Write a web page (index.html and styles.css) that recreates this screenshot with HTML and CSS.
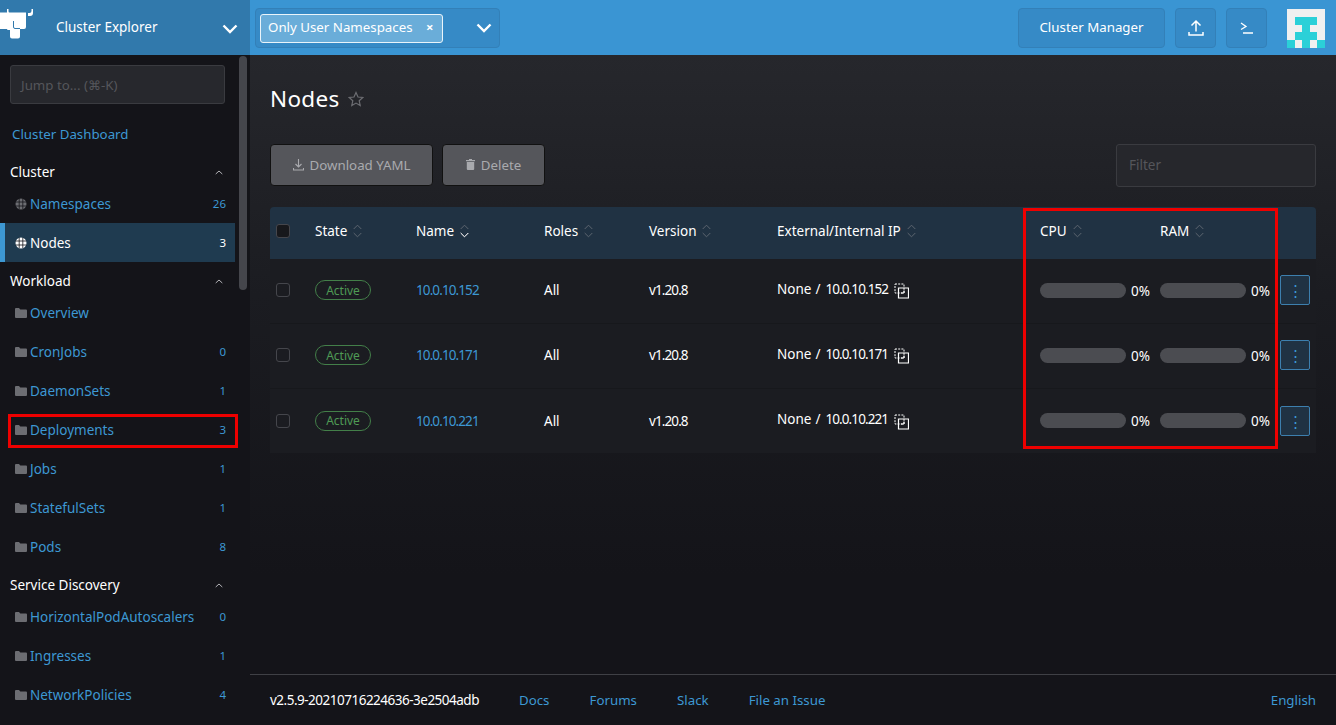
FILE: index.html
```html
<!DOCTYPE html>
<html lang="en">
<head>
<meta charset="utf-8">
<title>Nodes</title>
<link rel="stylesheet" href="styles.css">
</head>
<body>
<div class="app">

  <header class="topbar">
    <div class="brand">
      <svg class="logo" width="36" height="40" viewBox="0 0 36 40">
        <path fill="#fff" d="M0 12.500h7V9h1.500v2q0 1.500 1 1.500H26v14.500q0 2-2 2h-4v7.500q0 2-2 2h-6q-2 0-2-2V30H8q-1 0-1-1h-7z"/>
        <path fill="none" stroke="#3179ac" stroke-width="1" d="M13.500 21v6q0 1.500 1.500 1.500h5"/>
        <path fill="#fff" d="M28 16h2q3 0 3-3V9h-1.500v2q0 2-2 2H28z"/>
      </svg>
      <span class="brand-name">Cluster Explorer</span>
      <svg class="chev" width="16" height="10" viewBox="0 0 16 10"><path d="M1.500 1.500 8 8l6.500-6.500" fill="none" stroke="#fff" stroke-width="2.400"/></svg>
    </div>
    <div class="topbar-main">
      <div class="ns-select">
        <span class="ns-tag">Only User Namespaces <b class="ns-x">×</b></span>
        <svg class="chev" width="16" height="10" viewBox="0 0 16 10"><path d="M1.500 1.500 8 8l6.500-6.500" fill="none" stroke="#fff" stroke-width="2.400"/></svg>
      </div>
      <div class="top-actions">
        <button class="top-btn wide">Cluster Manager</button>
        <button class="top-btn square">
          <svg width="16" height="17" viewBox="0 0 16 17"><path d="M8 12.500V2M3.500 6.500 8 2l4.500 4.500M1 13v3h14v-3" fill="none" stroke="#fff" stroke-width="1.500"/></svg>
        </button>
        <button class="top-btn square">
          <svg width="14" height="12" viewBox="0 0 14 12"><path d="M1 1l5 3.500L1 7.500M3 11h10" fill="none" stroke="#fff" stroke-width="1.300"/></svg>
        </button>
        <svg class="avatar" width="38" height="39" viewBox="0 0 5 5" preserveAspectRatio="none" shape-rendering="crispEdges">
          <rect width="5" height="5" fill="#f0f0f0"/>
          <path fill="#2bd0d8" d="M1 1h3v1H3v1h1v1H1V3h1V2H1zM0 4h1v1H0zM2 4h1v1H2zM4 4h1v1H4z"/>
        </svg>
      </div>
    </div>
  </header>

  <div class="body">
    <nav class="side">
      <div class="side-scroll"></div>
      <div class="jump">Jump to... (⌘-K)</div>
      <a class="dash-link">Cluster Dashboard</a>

      <div class="group">Cluster <svg class="caret" width="8" height="5" viewBox="0 0 8 5"><path d="M.7 4 4 1l3.300 3" fill="none" stroke="#b4b4b8" stroke-width="1"/></svg></div>
      <a class="item first"><svg class="ic" width="12" height="12" viewBox="0 0 12 12"><use href="#globe"/></svg><span class="label">Namespaces</span><span class="count">26</span></a>
      <a class="item active"><svg class="ic" width="12" height="12" viewBox="0 0 12 12"><use href="#globe"/></svg><span class="label">Nodes</span><span class="count">3</span></a>

      <div class="group tight">Workload <svg class="caret" width="8" height="5" viewBox="0 0 8 5"><path d="M.7 4 4 1l3.300 3" fill="none" stroke="#b4b4b8" stroke-width="1"/></svg></div>
      <a class="item first"><svg class="ic" width="12" height="10" viewBox="0 0 12 10"><use href="#folder"/></svg><span class="label">Overview</span></a>
      <a class="item"><svg class="ic" width="12" height="10" viewBox="0 0 12 10"><use href="#folder"/></svg><span class="label">CronJobs</span><span class="count">0</span></a>
      <a class="item"><svg class="ic" width="12" height="10" viewBox="0 0 12 10"><use href="#folder"/></svg><span class="label">DaemonSets</span><span class="count">1</span></a>
      <a class="item"><svg class="ic" width="12" height="10" viewBox="0 0 12 10"><use href="#folder"/></svg><span class="label">Deployments</span><span class="count">3</span></a>
      <a class="item"><svg class="ic" width="12" height="10" viewBox="0 0 12 10"><use href="#folder"/></svg><span class="label">Jobs</span><span class="count">1</span></a>
      <a class="item"><svg class="ic" width="12" height="10" viewBox="0 0 12 10"><use href="#folder"/></svg><span class="label">StatefulSets</span><span class="count">1</span></a>
      <a class="item"><svg class="ic" width="12" height="10" viewBox="0 0 12 10"><use href="#folder"/></svg><span class="label">Pods</span><span class="count">8</span></a>

      <div class="group tight">Service Discovery <svg class="caret" width="8" height="5" viewBox="0 0 8 5"><path d="M.7 4 4 1l3.300 3" fill="none" stroke="#b4b4b8" stroke-width="1"/></svg></div>
      <a class="item first"><svg class="ic" width="12" height="10" viewBox="0 0 12 10"><use href="#folder"/></svg><span class="label">HorizontalPodAutoscalers</span><span class="count">0</span></a>
      <a class="item"><svg class="ic" width="12" height="10" viewBox="0 0 12 10"><use href="#folder"/></svg><span class="label">Ingresses</span><span class="count">1</span></a>
      <a class="item"><svg class="ic" width="12" height="10" viewBox="0 0 12 10"><use href="#folder"/></svg><span class="label">NetworkPolicies</span><span class="count">4</span></a>
    </nav>

    <main class="main">
      <div class="content">
        <div class="title-row">
          <h1>Nodes</h1>
          <svg class="star" width="16" height="16" viewBox="0 0 16 16"><path d="M8 1.500l2 4.500 4.800.500-3.600 3.200 1 4.800L8 12.100l-4.200 2.400 1-4.800L1.200 6.500 6 6z" fill="none" stroke="#6c6d72" stroke-width="1.200"/></svg>
        </div>

        <div class="toolbar">
          <button class="bulk dl">
            <svg width="11" height="12" viewBox="0 0 11 12"><path d="M5.500 0v7.500M2.500 5l3 3 3-3M.5 9v2h10V9" fill="none" stroke="#a9aaae" stroke-width="1.100"/></svg>
            Download YAML
          </button>
          <button class="bulk del">
            <svg width="9" height="11" viewBox="0 0 9 11"><path fill="#a9aaae" d="M3 0h3v1h3v1.200H0V1h3zM.8 3h7.400v7q0 1-1 1H1.800q-1 0-1-1z"/></svg>
            Delete
          </button>
          <div class="filter">Filter</div>
        </div>

        <div class="table">
          <div class="row head">
            <div class="cell"><span class="check head-check"></span></div>
            <div class="cell">State<svg class="sort" width="9" height="14" viewBox="0 0 9 14"><use href="#sort"/></svg></div>
            <div class="cell">Name<svg class="sort sorted" width="9" height="14" viewBox="0 0 9 14"><use href="#sort"/><path d="M.7 9 4.500 12.800 8.300 9" fill="none" stroke="#fff" stroke-width="1"/></svg></div>
            <div class="cell">Roles<svg class="sort" width="9" height="14" viewBox="0 0 9 14"><use href="#sort"/></svg></div>
            <div class="cell">Version<svg class="sort" width="9" height="14" viewBox="0 0 9 14"><use href="#sort"/></svg></div>
            <div class="cell">External/Internal IP<svg class="sort" width="9" height="14" viewBox="0 0 9 14"><use href="#sort"/></svg></div>
            <div class="cell">CPU<svg class="sort" width="9" height="14" viewBox="0 0 9 14"><use href="#sort"/></svg></div>
            <div class="cell">RAM<svg class="sort" width="9" height="14" viewBox="0 0 9 14"><use href="#sort"/></svg></div>
            <div class="cell"></div>
          </div>

          <div class="row node">
            <div class="cell"><span class="check"></span></div>
            <div class="cell"><span class="badge">Active</span></div>
            <div class="cell"><a class="link num">10.0.10.152</a></div>
            <div class="cell">All</div>
            <div class="cell num">v1.20.8</div>
            <div class="cell ip">None<span class="sep">/</span><span class="num">10.0.10.152</span><svg class="copy" width="15" height="16" viewBox="0 0 15 16"><use href="#copy"/></svg></div>
            <div class="cell"><span class="bar"></span><span class="pct">0%</span></div>
            <div class="cell"><span class="bar"></span><span class="pct">0%</span></div>
            <div class="cell"><button class="more">⋮</button></div>
          </div>

          <div class="row node">
            <div class="cell"><span class="check"></span></div>
            <div class="cell"><span class="badge">Active</span></div>
            <div class="cell"><a class="link num">10.0.10.171</a></div>
            <div class="cell">All</div>
            <div class="cell num">v1.20.8</div>
            <div class="cell ip">None<span class="sep">/</span><span class="num">10.0.10.171</span><svg class="copy" width="15" height="16" viewBox="0 0 15 16"><use href="#copy"/></svg></div>
            <div class="cell"><span class="bar"></span><span class="pct">0%</span></div>
            <div class="cell"><span class="bar"></span><span class="pct">0%</span></div>
            <div class="cell"><button class="more">⋮</button></div>
          </div>

          <div class="row node">
            <div class="cell"><span class="check"></span></div>
            <div class="cell"><span class="badge">Active</span></div>
            <div class="cell"><a class="link num">10.0.10.221</a></div>
            <div class="cell">All</div>
            <div class="cell num">v1.20.8</div>
            <div class="cell ip">None<span class="sep">/</span><span class="num">10.0.10.221</span><svg class="copy" width="15" height="16" viewBox="0 0 15 16"><use href="#copy"/></svg></div>
            <div class="cell"><span class="bar"></span><span class="pct">0%</span></div>
            <div class="cell"><span class="bar"></span><span class="pct">0%</span></div>
            <div class="cell"><button class="more">⋮</button></div>
          </div>
        </div>
      </div>

      <footer class="foot">
        <span class="version">v2.5.9-20210716224636-3e2504adb</span>
        <a>Docs</a>
        <a>Forums</a>
        <a>Slack</a>
        <a>File an Issue</a>
        <a class="lang">English</a>
      </footer>
    </main>
  </div>

  <!-- red boxes drawn on the screenshot -->
  <div class="mark mark-deploy"></div>
  <div class="mark mark-metrics"></div>
</div>

<svg class="defs" width="0" height="0">
  <defs>
    <g id="globe">
      <circle cx="6" cy="6" r="5.500" fill="currentColor"/>
      <path d="M.5 4h11M.5 8h11M4.200 .8v10.400M7.800 .8v10.400" stroke="#141419" stroke-width=".8" fill="none"/>
    </g>
    <path id="folder" fill="currentColor" d="M0 1q0-1 1-1h3l1.300 1.500H11q1 0 1 1V9q0 1-1 1H1q-1 0-1-1z"/>
    <path id="sort" fill="none" stroke="#5d6670" stroke-width="1" d="M.7 5 4.500 1.200 8.300 5M.7 9 4.500 12.800 8.300 9"/>
    <g id="copy" fill="none" stroke="#fff">
      <path d="M1 1h9v9H1z" stroke-dasharray="2 1.200"/>
      <path d="M4.500 5h10v10h-10z" stroke-width="1.200"/>
      <path d="M7 10h3V7.500" stroke-width="1"/>
    </g>
  </defs>
</svg>
</body>
</html>
```

FILE: styles.css
```css
html, body {
  margin: 0;
  height: 100%;
  overflow: hidden;
}

body {
  background: #141419;
  color: #fff;
  font-family: "Noto Sans", "Open Sans", "Liberation Sans", sans-serif;
  font-size: 13.500px;
}

a { color: #3d98d3; text-decoration: none; }

button {
  font-family: inherit;
  cursor: pointer;
}

.defs { position: absolute; }

.app {
  position: relative;
  height: 725px;
  display: flex;
  flex-direction: column;
  overflow: hidden;
}

/* header */
.topbar {
  height: 55px;
  flex: none;
  display: flex;
  background: #3a95d3;
}

.brand {
  width: 250px;
  flex: none;
  display: flex;
  align-items: center;
  background: #3179ac;
}

.logo {
  margin-top: -15px;
  flex: none;
}

.brand-name {
  margin-left: 20px;
  margin-bottom: 1px;
  font-size: 13.500px;
  flex: 1;
}

.brand .chev { margin-right: 12px; margin-top: 2px; }

.topbar-main {
  flex: 1;
  display: flex;
  justify-content: space-between;
  align-items: center;
  padding: 0 11px 0 5px;
}

.ns-select {
  width: 245px;
  height: 40px;
  box-sizing: border-box;
  display: flex;
  align-items: center;
  justify-content: space-between;
  padding: 0 7px 0 4px;
  background: #368ac6;
  border: 1px solid #3380b8;
  border-radius: 4px;
  margin-top: 1px;
}

.ns-tag {
  height: 29px;
  box-sizing: border-box;
  display: flex;
  align-items: center;
  padding: 0 9px 2px 7px;
  background: #6aadd9;
  border: 1px solid #eaf4fa;
  border-radius: 3px;
  font-size: 13.300px;
  white-space: pre;
}

.ns-x {
  margin-left: 10px;
  font-weight: 700;
  font-size: 13px;
}

.top-actions {
  display: flex;
  align-items: center;
}

.top-btn {
  height: 40px;
  box-sizing: border-box;
  background: #368ac6;
  border: 1px solid #3380b8;
  border-radius: 4px;
  color: #fff;
  font-size: 13.300px;
  padding: 0;
  display: flex;
  align-items: center;
  justify-content: center;
}

.top-btn.wide { width: 147px; margin-right: 10px; padding-bottom: 2px; }
.top-btn.square { width: 41px; margin-right: 10px; }

.avatar {
  display: block;
  margin-left: 10px;
  margin-top: 1px;
}

/* sidebar */
.body {
  flex: 1;
  display: flex;
  min-height: 0;
}

.side {
  position: relative;
  width: 250px;
  flex: none;
  background: #141419;
  padding-top: 10px;
  box-sizing: border-box;
  overflow: hidden;
}

.side-scroll {
  position: absolute;
  left: 239px;
  top: 1px;
  width: 8px;
  height: 234px;
  border-radius: 4px;
  background: #45464c;
}

.jump {
  width: 215px;
  height: 39px;
  box-sizing: border-box;
  margin-left: 10px;
  padding-left: 10px;
  display: flex;
  align-items: center;
  background: #27282d;
  border: 1px solid #3a3b40;
  border-radius: 3px;
  color: #55565b;
  font-size: 13.300px;
}

.dash-link {
  display: block;
  margin: 20px 0 0 12px;
  height: 20px;
  line-height: 20px;
  font-size: 13.300px;
}

.group {
  width: 235px;
  box-sizing: border-box;
  height: 20px;
  line-height: 20px;
  margin-top: 18px;
  padding: 0 10px;
  display: flex;
  justify-content: space-between;
  align-items: center;
}

.group.tight { margin-top: 9px; }

.caret { margin-right: 2px; }

.item {
  width: 235px;
  height: 39px;
  box-sizing: border-box;
  padding: 0 9px 0 15px;
  display: flex;
  align-items: center;
  color: #3d98d3;
}

.item.first { margin-top: 2px; height: 39px; }

.item .ic {
  color: #6c6d72;
  flex: none;
  margin-right: 3px;
}

.label { flex: 1; }

.count { font-size: 11.500px; }

.item.active {
  margin-top: 0;
  border-left: 5px solid #3d98d3;
  padding-left: 10px;
  background: #1f3b50;
  color: #fff;
}

.item.active .ic { color: #fff; }

/* main area */
.main {
  flex: 1;
  min-width: 0;
  display: flex;
  flex-direction: column;
  background: linear-gradient(#26272c 0, #1b1c21 240px, #141419 520px);
}

.content {
  flex: 1;
  padding: 0 20px;
}

.title-row {
  height: 89px;
  box-sizing: border-box;
  padding-bottom: 3px;
  display: flex;
  align-items: center;
}

h1 {
  margin: 0;
  font-weight: 400;
  font-size: 22.500px;
  letter-spacing: .3px;
}

.star { margin-left: 8px; margin-top: 2px; }

.toolbar {
  display: flex;
  align-items: center;
  height: 42px;
  margin-bottom: 21px;
}

.bulk {
  height: 42px;
  box-sizing: border-box;
  background: #55565b;
  border: 1px solid #111;
  border-radius: 4px;
  color: #a9aaae;
  font-size: 13.300px;
  display: flex;
  align-items: center;
  justify-content: center;
  gap: 6px;
  padding: 0 0 1px;
}

.bulk.dl { width: 163px; margin-right: 9px; }
.bulk.del { width: 103px; }

.filter {
  margin-left: auto;
  width: 200px;
  height: 43px;
  box-sizing: border-box;
  padding: 0 0 1px 12px;
  display: flex;
  align-items: center;
  background: #26272c;
  border: 1px solid #3a3b40;
  border-radius: 3px;
  color: #55565b;
}

/* table */
.row {
  display: grid;
  grid-template-columns: 45px 101px 128px 105px 128px 263px 120px 120px 36px;
  align-items: center;
}

.head {
  height: 52px;
  box-sizing: border-box;
  padding-bottom: 4px;
  background: #203243;
  border-radius: 4px 4px 0 0;
  font-size: 13.500px;
}

.node {
  height: 65px;
  box-sizing: border-box;
  padding-bottom: 2px;
  background: #1b1c21;
  border-bottom: 1px solid #17181c;
  font-size: 13.500px;
}

.node:last-child { border-bottom: 0; height: 64px; padding-bottom: 1px; }

.cell {
  display: flex;
  align-items: center;
  white-space: pre;
}

.num {
  font-size: 13.500px;
  letter-spacing: -.9px;
}

.check {
  display: block;
  width: 12px;
  height: 12px;
  margin-left: 6px;
  border: 1px solid #45464c;
  border-radius: 3px;
}

.head-check { background: #17181c; }

.sort { margin-left: 6px; }

.badge {
  height: 20px;
  width: 56px;
  box-sizing: border-box;
  display: flex;
  align-items: center;
  justify-content: center;
  border: 1px solid #437f49;
  border-radius: 10px;
  color: #4f9a55;
  font-size: 12px;
}

.link { color: #3d98d3; }

.ip { margin-top: -3px; }

.sep { margin: 0 5px 0 4px; }

.copy { margin-left: 6px; margin-top: 5px; }

.bar {
  display: block;
  width: 86px;
  height: 15px;
  border-radius: 8px;
  background: #4b4c51;
}

.pct { margin-left: 5px; margin-top: 1px; }

.more {
  width: 30px;
  height: 30px;
  padding: 0;
  background: #203243;
  border: 1px solid #3d7fae;
  border-radius: 2px;
  color: #3d98d3;
  font-size: 15px;
  line-height: 26px;
}

/* footer */
.foot {
  height: 51px;
  flex: none;
  box-sizing: border-box;
  border-top: 1px solid #3f4045;
  padding: 0 20px;
  display: flex;
  align-items: center;
  gap: 40px;
  background: #141419;
}

.foot .version { letter-spacing: -.5px; }

.foot a { font-size: 13.300px; }

.foot .lang { margin-left: auto; }

/* annotations over the page */
.mark {
  position: absolute;
  box-sizing: border-box;
  border: 3px solid #ee0000;
}

.mark-deploy {
  left: 8px;
  top: 414px;
  width: 230px;
  height: 34px;
}

.mark-metrics {
  left: 1023px;
  top: 208px;
  width: 255px;
  height: 241px;
}
```
